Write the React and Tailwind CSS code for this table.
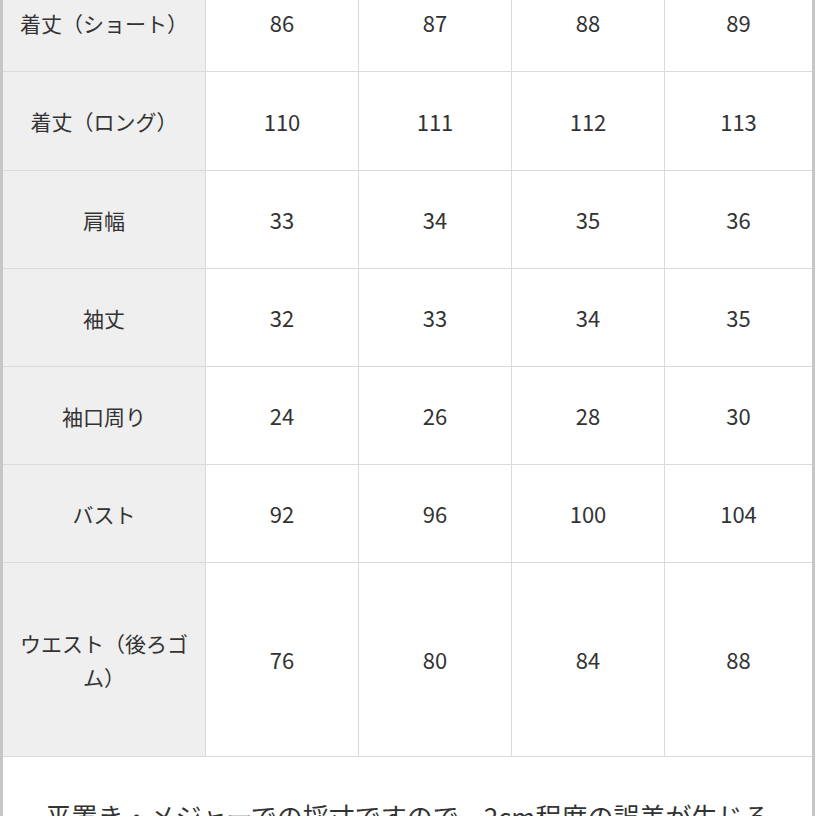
import React from 'react';

const rows = [
  { label: '着丈（ショート）', values: [86, 87, 88, 89], h: 'h-[97px]' },
  { label: '着丈（ロング）', values: [110, 111, 112, 113], h: 'h-[98px]' },
  { label: '肩幅', values: [33, 34, 35, 36], h: 'h-[97px]' },
  { label: '袖丈', values: [32, 33, 34, 35], h: 'h-[97px]' },
  { label: '袖口周り', values: [24, 26, 28, 30], h: 'h-[97px]' },
  { label: 'バスト', values: [92, 96, 100, 104], h: 'h-[97px]' },
  { label: 'ウエスト（後ろゴム）', values: [76, 80, 84, 88], h: 'h-[193px]' },
];

const font = { fontFamily: '"Noto Sans CJK JP", "Noto Sans", sans-serif' };

export default function App() {
  return (
    <div className="w-[816px] h-[816px] overflow-hidden bg-white text-[#333]" style={font}>
      <div className="w-[815px] -mt-[26px] border-x-[3px] border-[#c6c6c6]">
        {/* size grid */}
        <div className="grid grid-cols-[202px_152px_152px_152px_1fr] gap-px bg-[#dadada] border-b border-[#dadada]">
          {rows.map((row) => (
            <React.Fragment key={row.label}>
              <div
                className={`bg-[#efefef] flex items-center justify-center text-center px-[10px] text-[21px] leading-[34px] ${row.h}`}
              >
                {row.label}
              </div>
              {row.values.map((v, i) => (
                <div key={i} className="bg-white flex items-center justify-center text-[22px]">
                  {v}
                </div>
              ))}
            </React.Fragment>
          ))}
        </div>

        {/* note */}
        <div className="bg-white pt-[39px] h-[120px] text-center text-[26px] leading-[39px] whitespace-nowrap">
          平置き・メジャーでの採寸ですので、2cm程度の誤差が生じる
        </div>
      </div>
    </div>
  );
}
